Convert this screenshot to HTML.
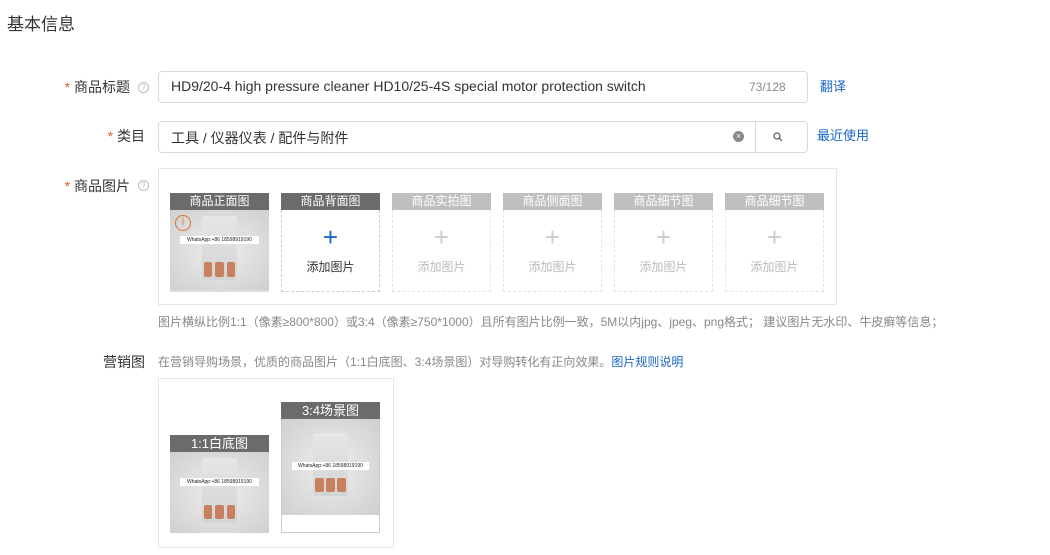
<!DOCTYPE html><html><head><meta charset="utf-8"><style>
body{margin:0;width:1050px;height:555px;background:#fff;font-family:"Liberation Sans","Noto Sans CJK SC",sans-serif;color:#333;position:relative;overflow:hidden}
.a{position:absolute}
.lbl{position:absolute;font-size:14px;text-align:right;white-space:nowrap}
.lbl b{color:#e4572e;font-weight:normal}
.help{position:absolute;width:9px;height:9px;border:1px solid #bbb;border-radius:50%;font-size:8px;color:#bbb;text-align:center;line-height:9px}
.inp{position:absolute;border:1px solid #d9d9d9;border-radius:4px;background:#fff}
.slot{position:absolute;width:99px;top:193px;height:99px}
.hd{height:17px;background:#6b6b6b;color:#fff;font-size:12px;text-align:center;line-height:17px}
.lt .hd{background:#bfbfbf}
.dash{border:1px dashed #ccc;border-top:none;height:82px;text-align:center;box-sizing:border-box;padding-top:14px}
.lt .dash{border-color:#e4e4e4}
.plus{font-size:26px;color:#1a66c4;line-height:26px;font-weight:300}
.lt .plus{color:#ccc}
.add{font-size:12px;color:#333;margin-top:8px}
.lt .add{color:#bbb}
.img{background:radial-gradient(ellipse at 50% 50%,#eee,#cfcfcf);position:relative;overflow:hidden}
.dev{position:absolute;left:32%;top:8%;width:36%;height:80%;background:linear-gradient(#e6e6e6,#d4d4d4);border-radius:3px}
.dev i{position:absolute;bottom:6%;width:24%;height:22%;background:#c98060;border-radius:2px}
.wa{position:absolute;left:10%;width:80%;height:8px;background:#fff;font-size:5px;color:#222;text-align:center;line-height:8px}
</style></head><body>
<div class="a" style="left:7px;top:10px;font-size:17px;color:#333">基本信息</div>

<div class="lbl" style="right:920px;top:77px"><b>*</b> 商品标题</div>
<div class="help" style="left:138px;top:82px">?</div>
<div class="inp" style="left:158px;top:71px;width:648px;height:30px">
<div class="a" style="left:12px;top:6px;font-size:14px;color:#333;width:494px;overflow:hidden;white-space:nowrap">HD9/20-4 high pressure cleaner HD10/25-4S special motor protection switch</div>
<div class="a" style="left:590px;top:8px;font-size:12px;color:#888">73/128</div></div>
<div class="a" style="left:820px;top:76px;font-size:13px;color:#1a66c4">翻译</div>

<div class="lbl" style="right:905px;top:126px"><b>*</b> 类目</div>
<div class="inp" style="left:158px;top:121px;width:648px;height:30px">
<div class="a" style="left:12px;top:6px;font-size:14px">工具 / 仪器仪表 / 配件与附件</div>
<div class="a" style="left:574px;top:9px;width:11px;height:11px;border-radius:50%;background:#888;color:#fff;font-size:9px;line-height:11px;text-align:center">×</div>
<div class="a" style="left:596px;top:0;width:1px;height:30px;background:#d9d9d9"></div>
<svg class="a" style="left:614px;top:10px" width="10" height="10"><circle cx="4" cy="4" r="3" fill="none" stroke="#555" stroke-width="1.2"/><path d="M6.3 6.3L9 9" stroke="#555" stroke-width="1.2"/></svg></div>
<div class="a" style="left:817px;top:125px;font-size:13px;color:#1a66c4">最近使用</div>

<div class="lbl" style="right:920px;top:176px"><b>*</b> 商品图片</div>
<div class="help" style="left:138px;top:180px">?</div>
<div class="a" style="left:158px;top:168px;width:677px;height:135px;border:1px solid #e6e6e6"></div>

<div class="slot" style="left:170px"><div class="hd">商品正面图</div><div class="img" style="height:82px;border-bottom:2px solid #ddd;box-sizing:border-box">
<div class="dev"><i style="left:6%"></i><i style="left:38%"></i><i style="left:70%"></i></div><div class="wa" style="top:26px">WhatsApp:+86 18598919190</div>
<div class="a" style="left:5px;top:5px;width:14px;height:14px;border:1.5px solid #e07030;border-radius:50%;color:#e07030;font-size:10px;text-align:center;line-height:14px">i</div></div></div>
<div class="slot" style="left:281px"><div class="hd">商品背面图</div><div class="dash"><div class="plus">+</div><div class="add">添加图片</div></div></div>
<div class="slot lt" style="left:392px"><div class="hd">商品实拍图</div><div class="dash"><div class="plus">+</div><div class="add">添加图片</div></div></div>
<div class="slot lt" style="left:503px"><div class="hd">商品侧面图</div><div class="dash"><div class="plus">+</div><div class="add">添加图片</div></div></div>
<div class="slot lt" style="left:614px"><div class="hd">商品细节图</div><div class="dash"><div class="plus">+</div><div class="add">添加图片</div></div></div>
<div class="slot lt" style="left:725px"><div class="hd">商品细节图</div><div class="dash"><div class="plus">+</div><div class="add">添加图片</div></div></div>

<div class="a" style="left:158px;top:313px;font-size:12px;color:#888;white-space:nowrap">图片横纵比例1:1（像素≥800*800）或3:4（像素≥750*1000）且所有图片比例一致，5M以内jpg、jpeg、png格式； 建议图片无水印、牛皮癣等信息；</div>

<div class="lbl" style="right:905px;top:352px">营销图</div>
<div class="a" style="left:158px;top:353px;font-size:12px;color:#888;white-space:nowrap">在营销导购场景，优质的商品图片（1:1白底图、3:4场景图）对导购转化有正向效果。<span style="color:#1a66c4">图片规则说明</span></div>
<div class="a" style="left:158px;top:378px;width:234px;height:168px;border:1px solid #e6e6e6"></div>
<div class="a" style="left:170px;top:435px;width:99px"><div class="hd" style="font-size:13px">1:1白底图</div><div class="img" style="height:81px"><div class="dev"><i style="left:6%"></i><i style="left:38%"></i><i style="left:70%"></i></div><div class="wa" style="top:26px">WhatsApp:+86 18598919190</div></div></div>
<div class="a" style="left:281px;top:402px;width:99px;border:1px solid #ccc;border-top:none;height:131px;box-sizing:border-box"><div class="hd" style="font-size:13px;margin:0 -1px">3:4场景图</div><div class="img" style="height:96px"><div class="dev" style="top:15%;height:65%"><i style="left:6%"></i><i style="left:38%"></i><i style="left:70%"></i></div><div class="wa" style="top:43px">WhatsApp:+86 18598919190</div></div></div>
</body></html>
